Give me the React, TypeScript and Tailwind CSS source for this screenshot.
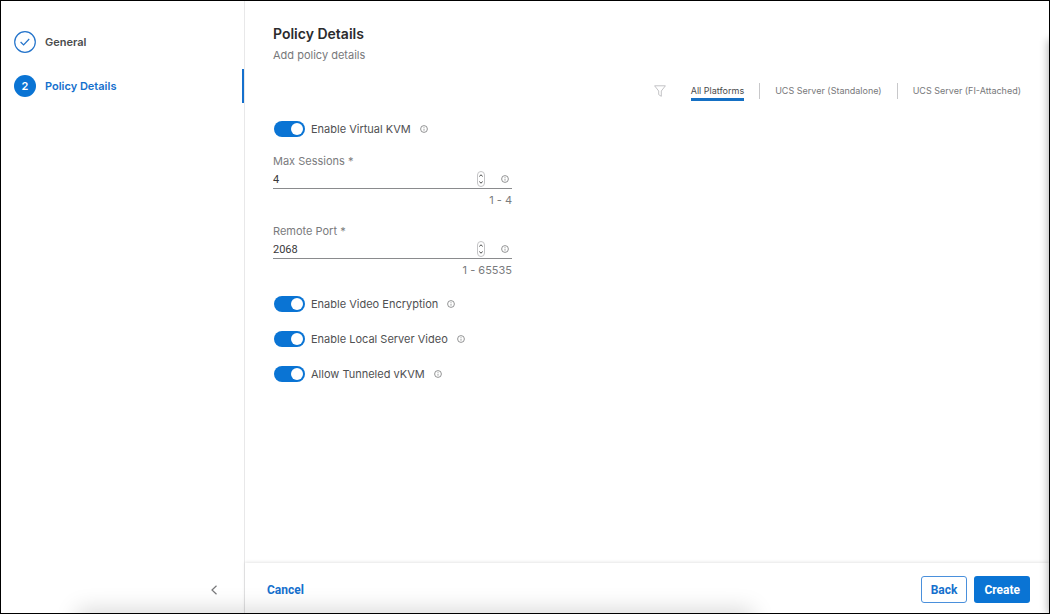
import { useState } from "react";

const PLATFORMS = [
  "All Platforms",
  "UCS Server (Standalone)",
  "UCS Server (FI-Attached)",
];

function InfoIcon() {
  return (
    <svg viewBox="0 0 8 8" className="size-2 shrink-0" fill="none" stroke="#77787a">
      <circle cx="4" cy="4" r="3.4" strokeWidth="0.8" />
      <path d="M4 3.7v2" strokeWidth="0.7" />
      <path d="M4 2.2v.8" strokeWidth="0.7" />
    </svg>
  );
}

function InfoButton({ label }: { label: string }) {
  return (
    <button type="button" aria-label={`About ${label}`} className="cursor-pointer">
      <InfoIcon />
    </button>
  );
}

function Toggle({ label }: { label: string }) {
  const [on, setOn] = useState(true);

  return (
    <div className="flex h-6 items-center gap-[9px]">
      <label className="flex cursor-pointer items-center gap-[6px] text-[11px] text-[#4f5052]">
        <input
          type="checkbox"
          checked={on}
          onChange={() => setOn(!on)}
          className="peer sr-only"
        />
        <span className="ml-px flex h-4 w-[31px] items-center rounded-full bg-[#9e9ea2] px-[2px] peer-checked:justify-end peer-checked:bg-[#0a74d4]">
          <span className="size-3 rounded-full bg-white" />
        </span>
        {label}
      </label>
      <InfoButton label={label} />
    </div>
  );
}

interface NumberFieldProps {
  id: string;
  label: string;
  initial: number;
  max: number;
}

function NumberField({ id, label, initial, max }: NumberFieldProps) {
  const [value, setValue] = useState(initial);
  const step = (by: number) =>
    setValue((v) => Math.min(max, Math.max(1, v + by)));

  return (
    <div className="w-[239px] text-[11px] leading-4">
      <label htmlFor={id} className="block text-[#7a7b7d]">
        {label} *
      </label>
      <div className="flex h-5 items-center border-b border-[#8a8b8d]">
        <input
          id={id}
          type="text"
          inputMode="numeric"
          value={value}
          onChange={(e) => setValue(Number(e.target.value) || 1)}
          className="min-w-0 flex-1 pt-[3px] font-[Roboto,sans-serif] text-[#39393b] outline-none"
        />
        <div className="mr-4 flex h-4 w-2 flex-col justify-between overflow-hidden rounded-full border border-[#c4c4c6] py-[2px]">
          <button
            type="button"
            aria-label={`Increase ${label}`}
            onClick={() => step(1)}
            className="flex justify-center"
          >
            <svg viewBox="0 0 4 3" className="h-[3px] w-1" fill="none" stroke="#444">
              <path d="M.3 2.400 2 .8l1.700 1.600" />
            </svg>
          </button>
          <button
            type="button"
            aria-label={`Decrease ${label}`}
            onClick={() => step(-1)}
            className="flex justify-center"
          >
            <svg viewBox="0 0 4 3" className="h-[3px] w-1" fill="none" stroke="#444">
              <path d="M.3.6 2 2.200l1.700-1.600" />
            </svg>
          </button>
        </div>
        <span className="mr-[3px] flex">
          <InfoButton label={label} />
        </span>
      </div>
      <p className="mt-[3px] text-right text-[#7a7b7d]">1 - {max}</p>
    </div>
  );
}

function Sidebar() {
  return (
    <aside className="flex w-[244px] shrink-0 flex-col border-r border-[#e8e8e9]">
      <ol className="mt-6 flex flex-col gap-[10px] text-[11px] font-semibold">
        <li className="flex h-[34px] items-center gap-[9px] pl-[13px] text-[#4a4b4d]">
          <svg viewBox="0 0 22 22" className="size-[22px]" fill="none" stroke="#2474cb">
            <circle cx="11" cy="11" r="10.300" strokeWidth="1.200" />
            <path d="m6.600 11 3 3 5.600-6" strokeWidth="1.200" />
          </svg>
          General
        </li>
        <li
          aria-current="step"
          className="flex h-[34px] items-center gap-[9px] border-r-2 border-[#1570cd] pl-[13px] text-[#1570cd]"
        >
          <span className="flex size-[22px] items-center justify-center rounded-full bg-[#0a74d4] text-white">
            2
          </span>
          Policy Details
        </li>
      </ol>
      <button
        type="button"
        aria-label="Collapse"
        className="mt-auto mr-[26px] mb-[17px] cursor-pointer self-end"
      >
        <svg viewBox="0 0 8 12" className="h-3 w-2" fill="none" stroke="#77787a">
          <path d="M6.500 1.800 2 6l4.500 4.200" strokeWidth="1.200" />
        </svg>
      </button>
    </aside>
  );
}

function PlatformTabs() {
  const [active, setActive] = useState(PLATFORMS[0]);

  return (
    <div className="mt-[14px] flex h-6 items-center justify-end text-[9px]">
      <svg viewBox="0 0 12 12" className="mr-[25px] size-3" fill="none" stroke="#bcbcbf">
        <path d="M.6.8h10.800L7.300 6v5.300L4.700 9.600V6z" strokeWidth="0.900" />
      </svg>
      <div role="tablist" className="flex items-center divide-x divide-[#c8c8ca]">
        {PLATFORMS.map((name) => (
          <div key={name} className="flex h-4 items-center px-[15px] first:pl-0 last:pr-0">
            <button
              type="button"
              role="tab"
              aria-selected={active === name}
              onClick={() => setActive(name)}
              className="cursor-pointer border-b-[3px] border-transparent pt-[3px] leading-[14px] text-[#77787a] aria-selected:border-[#1570c4] aria-selected:text-[#4a4b4d]"
            >
              {name}
            </button>
          </div>
        ))}
      </div>
    </div>
  );
}

export default function App() {
  return (
    <div className="relative flex h-screen overflow-hidden border border-black bg-white font-[Inter,sans-serif]">
      <Sidebar />
      <div className="flex min-w-0 flex-1 flex-col">
        <main className="flex-1 overflow-auto pt-[22px] pr-7 pl-7">
          <h1 className="text-sm leading-[22px] font-semibold text-[#2b2b2d]">
            Policy Details
          </h1>
          <p className="text-[11px] leading-5 text-[#77787a]">Add policy details</p>
          <PlatformTabs />
          <form className="mt-[14px]">
            <Toggle label="Enable Virtual KVM" />
            <div className="mt-3 mb-[14px] flex flex-col gap-[15px]">
              <NumberField id="max-sessions" label="Max Sessions" initial={4} max={4} />
              <NumberField id="remote-port" label="Remote Port" initial={2068} max={65535} />
            </div>
            <div className="flex flex-col gap-[11px]">
              <Toggle label="Enable Video Encryption" />
              <Toggle label="Enable Local Server Video" />
              <Toggle label="Allow Tunneled vKVM" />
            </div>
          </form>
        </main>
        <footer className="flex h-[50px] items-center gap-[7px] pt-[3px] pr-[19px] pl-[22px] font-[Roboto,sans-serif] text-xs font-bold shadow-[0_-1px_3px_rgba(0,0,0,0.10)]">
          <button type="button" className="mr-auto cursor-pointer text-[#1570cd]">
            Cancel
          </button>
          <button
            type="button"
            className="h-[27px] cursor-pointer rounded-[3px] border border-[#4a90dc] bg-white px-[9px] text-[#1570cd]"
          >
            Back
          </button>
          <button
            type="button"
            className="h-[27px] cursor-pointer rounded-[3px] bg-[#0a74d4] px-[10px] text-white"
          >
            Create
          </button>
        </footer>
      </div>
      {/* Shade cast on the window's edges */}
      <div className="pointer-events-none absolute top-10 -right-2 bottom-0 w-2 shadow-[0_0_8px_1px_rgba(0,0,0,0.3)]" />
      <div className="pointer-events-none absolute right-[29%] -bottom-4 left-[8%] h-3 shadow-[0_0_22px_8px_rgba(0,0,0,0.15)]" />
    </div>
  );
}
